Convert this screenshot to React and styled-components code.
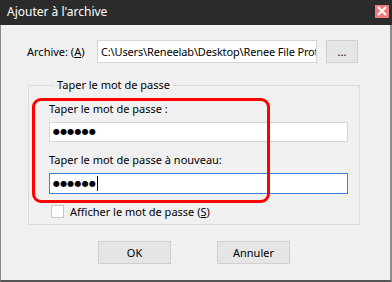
import React from 'react';
import styled, {createGlobalStyle} from 'styled-components';

const uiFont = `"Noto Sans", "Liberation Sans", Arial, sans-serif`;

const GlobalStyle = createGlobalStyle`
  html, body {
    margin: 0;
    padding: 0;
    background: #f0f0f0;
  }
  * {
    box-sizing: border-box;
  }
`

const Window = styled.div`
  width: 392px;
  height: 282px;
  display: flex;
  flex-direction: column;
  font-family: ${uiFont};
  font-size: 11px;
  color: #000;
`

const TitleBar = styled.div`
  height: 25px;
  flex: none;
  background: #2b2b2b;
  color: #fff;
  display: flex;
  align-items: center;
  justify-content: space-between;
  padding: 0 3px 2px 7px;
  font-size: 12px;
`

const CloseButton = styled.div`
  width: 14px;
  height: 13px;
  background: #f07a7a;
  display: flex;
  align-items: center;
  justify-content: center;
  margin-top: -1px;
`

const Body = styled.div`
  flex: 1;
  background: #f0f0f0;
  border-left: 1px solid #8c8c8c;
  border-right: 2px solid #8c8c8c;
  border-bottom: 2px solid #555;
  display: flex;
  flex-direction: column;
`

const ArchiveRow = styled.div`
  display: flex;
  align-items: center;
  margin: 15px 0 0 26px;
`

const Label = styled.span`
  width: 70px;
  flex: none;
`

const Field = styled.div`
  height: ${p => p.$height || 21}px;
  width: ${p => p.$width}px;
  flex: none;
  background: #fff;
  border: 1px solid ${p => (p.$focused ? '#3c7fd8' : '#d6d6d6')};
  display: flex;
  align-items: center;
  padding: 0 3px;
  white-space: nowrap;
  overflow: hidden;
  font-size: 11px;
`

const PathText = styled.span`
  letter-spacing: -0.15px;
`

const Dots = styled.span`
  font-size: 8px;
  letter-spacing: 0.2px;
  line-height: 1;
  font-family: "DejaVu Sans", sans-serif;
`

const Caret = styled.span`
  width: 1px;
  height: 15px;
  background: #000;
  margin-left: 1px;
`

const Button = styled.div`
  width: ${p => p.$width}px;
  height: ${p => p.$height}px;
  flex: none;
  background: #e5e5e5;
  border: 1px solid #d0d0d0;
  display: flex;
  align-items: center;
  justify-content: center;
  font-size: 11px;
`

const Group = styled.fieldset`
  margin: 15px 0 0 27px;
  width: 332px;
  height: 147px;
  border: 1px solid #dcdcdc;
  padding: 3px 0 0 20px;
  position: relative;
`

const Legend = styled.legend`
  margin-left: 5px;
  padding: 0 3px;
  font-size: 11px;
  line-height: 14px;
`

const FieldLabel = styled.div`
  height: 14px;
  line-height: 14px;
  margin: ${p => p.$top}px 0 6px;
`

const CheckRow = styled.div`
  display: flex;
  align-items: center;
  gap: 6px;
  margin: 10px 0 0 2px;
`

const CheckBox = styled.div`
  width: 13px;
  height: 13px;
  background: #fff;
  border: 1px solid #c8c8c8;
`

const Highlight = styled.div`
  position: absolute;
  left: 3px;
  top: 6px;
  width: 238px;
  height: 105px;
  border: 3px solid #ff0000;
  border-radius: 9px;
  pointer-events: none;
`

const ButtonRow = styled.div`
  display: flex;
  gap: 46px;
  margin: 16px 0 0 97px;
`

const Underline = styled.span`
  text-decoration: underline;
`

export default function App() {
  return (
    <>
      <GlobalStyle />
      <Window>
        <TitleBar>
          <span>Ajouter à l'archive</span>
          <CloseButton>
            <svg width="10" height="10" viewBox="0 0 10 10">
              <path d="M1 1 L9 9 M9 1 L1 9" stroke="#fff" strokeWidth="2" />
            </svg>
          </CloseButton>
        </TitleBar>
        <Body>
          <ArchiveRow>
            <Label>Archive: (<Underline>A</Underline>)</Label>
            <Field $width={220} $height={23}>
              <PathText>C:\Users\Reneelab\Desktop\Renee File Prote</PathText>
            </Field>
            <Button $width={32} $height={23} style={{marginLeft: 9}}>...</Button>
          </ArchiveRow>
          <Group>
            <Legend>Taper le mot de passe</Legend>
            <FieldLabel $top={7}>Taper le mot de passe :</FieldLabel>
            <Field $width={299} $height={20}>
              <Dots>●●●●●●</Dots>
            </Field>
            <FieldLabel $top={11}>Taper le mot de passe à nouveau:</FieldLabel>
            <Field $width={299} $height={21} $focused>
              <Dots>●●●●●●</Dots>
              <Caret />
            </Field>
            <CheckRow>
              <CheckBox />
              <span>Afficher le mot de passe (<Underline>S</Underline>)</span>
            </CheckRow>
            <Highlight />
          </Group>
          <ButtonRow>
            <Button $width={73} $height={23}>OK</Button>
            <Button $width={73} $height={23}>Annuler</Button>
          </ButtonRow>
        </Body>
      </Window>
    </>
  );
}
